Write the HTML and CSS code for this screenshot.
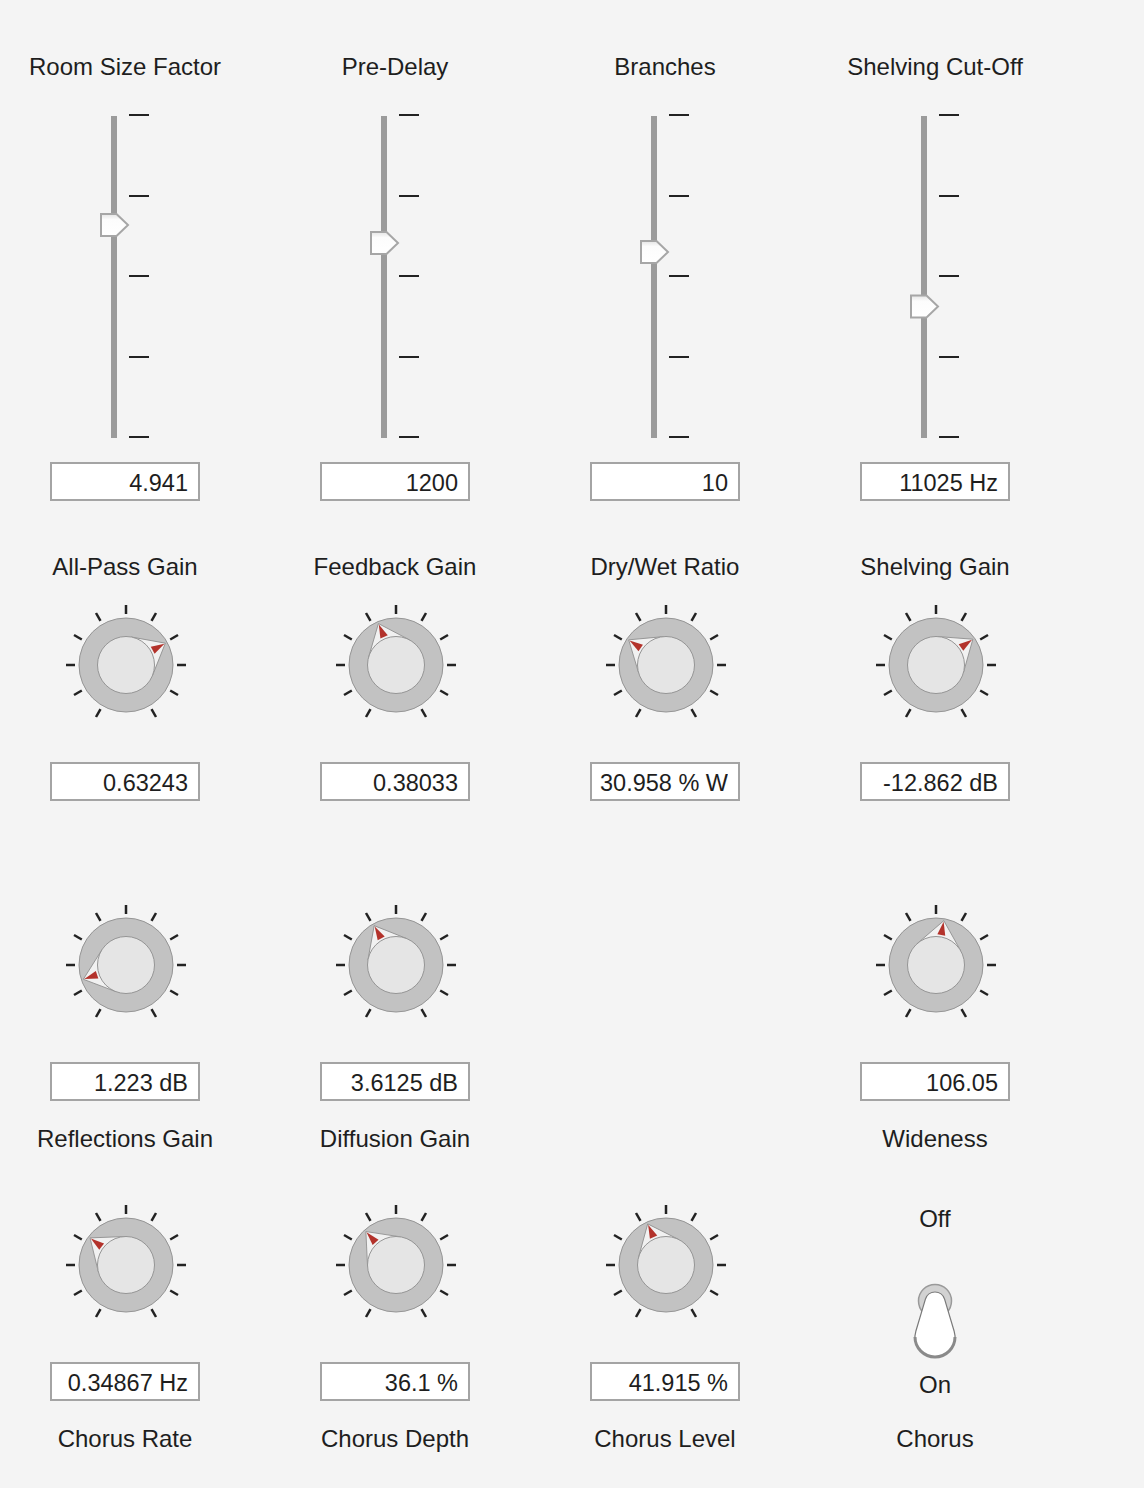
FILE: index.html
```html
<!DOCTYPE html>
<html lang="en">
<head>
    <meta charset="UTF-8">
    <title>Reverb</title>
    <link rel="stylesheet" href="styles.css">
</head>
<body>
    <!-- shared drawing parts -->
    <svg class="defs" width="0" height="0">
        <defs>
            <linearGradient id="thumbFill" x1="0" y1="0" x2="0" y2="1">
                <stop offset="0" stop-color="#e4e4e4"/>
                <stop offset="0.25" stop-color="#fcfcfc"/>
                <stop offset="1" stop-color="#ffffff"/>
            </linearGradient>
            <g id="thumb">
                <polygon points="-13,-11 2.5,-11 14,0 2.5,11 -13,11" fill="url(#thumbFill)" stroke="#a6a6a6" stroke-width="2"/>
            </g>
            <g id="scale">
                <rect x="16" y="11" width="6" height="322" fill="#9b9b9b"/>
                <g stroke="#222" stroke-width="2">
                    <line x1="34" y1="10" x2="54" y2="10"/>
                    <line x1="34" y1="91" x2="54" y2="91"/>
                    <line x1="34" y1="171" x2="54" y2="171"/>
                    <line x1="34" y1="252" x2="54" y2="252"/>
                    <line x1="34" y1="332" x2="54" y2="332"/>
                </g>
            </g>
            <g id="dial">
                <g stroke="#222" stroke-width="2.5">
                    <line x1="0" y1="-51" x2="0" y2="-60"/>
                    <line x1="25.5" y1="-44.2" x2="30" y2="-52"/>
                    <line x1="44.2" y1="-25.5" x2="52" y2="-30"/>
                    <line x1="51" y1="0" x2="60" y2="0"/>
                    <line x1="44.2" y1="25.5" x2="52" y2="30"/>
                    <line x1="25.5" y1="44.2" x2="30" y2="52"/>
                    <line x1="-25.5" y1="-44.2" x2="-30" y2="-52"/>
                    <line x1="-44.2" y1="-25.5" x2="-52" y2="-30"/>
                    <line x1="-51" y1="0" x2="-60" y2="0"/>
                    <line x1="-44.2" y1="25.5" x2="-52" y2="30"/>
                    <line x1="-25.5" y1="44.2" x2="-30" y2="52"/>
                </g>
                <circle r="47" fill="#c2c2c2" stroke="#959595" stroke-width="1"/>
            </g>
            <g id="pointer">
                <polygon points="0,-45 22.05,-18.05 -22.05,-18.05" fill="#f1f1f1" stroke="#8e8e8e" stroke-width="0.8"/>
                <polygon points="0,-44 4,-30.5 -4,-30.5" fill="#b3322b"/>
            </g>
            <g id="cap">
                <circle r="28.5" fill="#e5e5e5" stroke="#959595" stroke-width="1"/>
            </g>
        </defs>
    </svg>

    <div class="panel">
        <!-- Sliders -->
        <div class="row row-sliders">
            <div class="cell">
                <div class="label">Room Size Factor</div>
                <svg class="slider" viewBox="0 0 60 340"><use href="#scale"/><use href="#thumb" transform="translate(19 120)"/></svg>
                <div class="value"><span>4.941</span></div>
            </div>
            <div class="cell">
                <div class="label">Pre-Delay</div>
                <svg class="slider" viewBox="0 0 60 340"><use href="#scale"/><use href="#thumb" transform="translate(19 138)"/></svg>
                <div class="value"><span>1200</span></div>
            </div>
            <div class="cell">
                <div class="label">Branches</div>
                <svg class="slider" viewBox="0 0 60 340"><use href="#scale"/><use href="#thumb" transform="translate(19 147)"/></svg>
                <div class="value"><span>10</span></div>
            </div>
            <div class="cell">
                <div class="label">Shelving Cut-Off</div>
                <svg class="slider" viewBox="0 0 60 340"><use href="#scale"/><use href="#thumb" transform="translate(19 201.5)"/></svg>
                <div class="value"><span>11025 Hz</span></div>
            </div>
        </div>

        <!-- Gains -->
        <div class="row row-gains">
            <div class="cell">
                <div class="label">All-Pass Gain</div>
                <svg class="knob" viewBox="-66 -65 130 130"><use href="#dial"/><use href="#pointer" transform="rotate(61)"/><use href="#cap"/></svg>
                <div class="value"><span>0.63243</span></div>
            </div>
            <div class="cell">
                <div class="label">Feedback Gain</div>
                <svg class="knob" viewBox="-66 -65 130 130"><use href="#dial"/><use href="#pointer" transform="rotate(-23)"/><use href="#cap"/></svg>
                <div class="value"><span>0.38033</span></div>
            </div>
            <div class="cell">
                <div class="label">Dry/Wet Ratio</div>
                <svg class="knob" viewBox="-66 -65 130 130"><use href="#dial"/><use href="#pointer" transform="rotate(-56)"/><use href="#cap"/></svg>
                <div class="value"><span>30.958 % Wet</span></div>
            </div>
            <div class="cell">
                <div class="label">Shelving Gain</div>
                <svg class="knob" viewBox="-66 -65 130 130"><use href="#dial"/><use href="#pointer" transform="rotate(55)"/><use href="#cap"/></svg>
                <div class="value"><span>-12.862 dB</span></div>
            </div>
        </div>

        <!-- Reflections / diffusion / wideness -->
        <div class="row row-lower">
            <div class="cell">
                <svg class="knob" viewBox="-66 -65 130 130"><use href="#dial"/><use href="#pointer" transform="rotate(-108.5)"/><use href="#cap"/></svg>
                <div class="value"><span>1.223 dB</span></div>
                <div class="label">Reflections Gain</div>
            </div>
            <div class="cell">
                <svg class="knob" viewBox="-66 -65 130 130"><use href="#dial"/><use href="#pointer" transform="rotate(-29)"/><use href="#cap"/></svg>
                <div class="value"><span>3.6125 dB</span></div>
                <div class="label">Diffusion Gain</div>
            </div>
            <div class="cell"></div>
            <div class="cell">
                <svg class="knob" viewBox="-66 -65 130 130"><use href="#dial"/><use href="#pointer" transform="rotate(10)"/><use href="#cap"/></svg>
                <div class="value"><span>106.05</span></div>
                <div class="label">Wideness</div>
            </div>
        </div>

        <!-- Chorus -->
        <div class="row row-chorus">
            <div class="cell">
                <svg class="knob" viewBox="-66 -65 130 130"><use href="#dial"/><use href="#pointer" transform="rotate(-53)"/><use href="#cap"/></svg>
                <div class="value"><span>0.34867 Hz</span></div>
                <div class="label">Chorus Rate</div>
            </div>
            <div class="cell">
                <svg class="knob" viewBox="-66 -65 130 130"><use href="#dial"/><use href="#pointer" transform="rotate(-42)"/><use href="#cap"/></svg>
                <div class="value"><span>36.1 %</span></div>
                <div class="label">Chorus Depth</div>
            </div>
            <div class="cell">
                <svg class="knob" viewBox="-66 -65 130 130"><use href="#dial"/><use href="#pointer" transform="rotate(-24)"/><use href="#cap"/></svg>
                <div class="value"><span>41.915 %</span></div>
                <div class="label">Chorus Level</div>
            </div>
            <div class="cell toggle-cell">
                <div class="label">Off</div>
                <svg class="toggle" viewBox="0 0 60 80">
                    <circle cx="30" cy="21" r="16.5" fill="#d2d2d2" stroke="#9a9a9a" stroke-width="1.5"/>
                    <path d="M20.42 19.14 A10 10 0 0 1 39.58 19.14 L49.16 51.29 A20 20 0 1 1 10.84 51.29 Z" fill="#ffffff" stroke="#7a7a7a" stroke-width="1.2"/>
                    <path d="M50 57 A20 20 0 0 1 10 57" fill="none" stroke="#8a8a8a" stroke-width="3"/>
                </svg>
                <div class="label toggle-on">On</div>
                <div class="label toggle-name">Chorus</div>
            </div>
        </div>
    </div>
</body>
</html>
```

FILE: styles.css
```css
/* Base */
* {
    margin: 0;
    padding: 0;
    box-sizing: border-box;
}

body {
    font-family: "Liberation Sans", Arial, sans-serif;
    background-color: #f4f4f4;
    color: #1e1e1e;
}

.defs {
    display: block;
    width: 0;
    height: 0;
}

.panel {
    padding-top: 53px;
}

/* Rows of four controls */
.row {
    display: grid;
    grid-template-columns: repeat(4, 250px);
    column-gap: 20px;
}

.cell {
    display: flex;
    flex-direction: column;
    align-items: center;
}

.label {
    font-size: 24px;
    line-height: 28px;
    height: 28px;
    white-space: nowrap;
}

.value {
    width: 150px;
    height: 39px;
    border: 2px solid #a4a4a4;
    background: #fff;
    padding: 0 10px 0 8px;
    font-size: 23.5px;
    line-height: 38px;
    text-align: right;
    white-space: nowrap;
}

/* text field clips at its content edge, like the native one */
.value span {
    display: block;
    overflow: hidden;
}

/* Sliders */
.slider {
    display: block;
    width: 60px;
    height: 340px;
    margin: 24px 0 17px;
}

/* Knobs */
.knob {
    display: block;
    width: 130px;
    height: 130px;
}

.row-gains {
    margin-top: 52px;
}

.row-gains .knob {
    margin: 19px 0 32px;
}

.row-lower {
    margin-top: 99px;
}

.row-chorus {
    margin-top: 47px;
}

.row-lower .knob,
.row-chorus .knob {
    margin-bottom: 32px;
}

.row-lower .value,
.row-chorus .value {
    margin-bottom: 24px;
}

/* Chorus switch */
.toggle-cell .label:first-child {
    margin-top: 5px;
}

.toggle {
    display: block;
    width: 60px;
    height: 80px;
    margin-top: 47px;
}

.toggle-on {
    margin-top: 11px;
}

.toggle-name {
    margin-top: 26px;
}
```
